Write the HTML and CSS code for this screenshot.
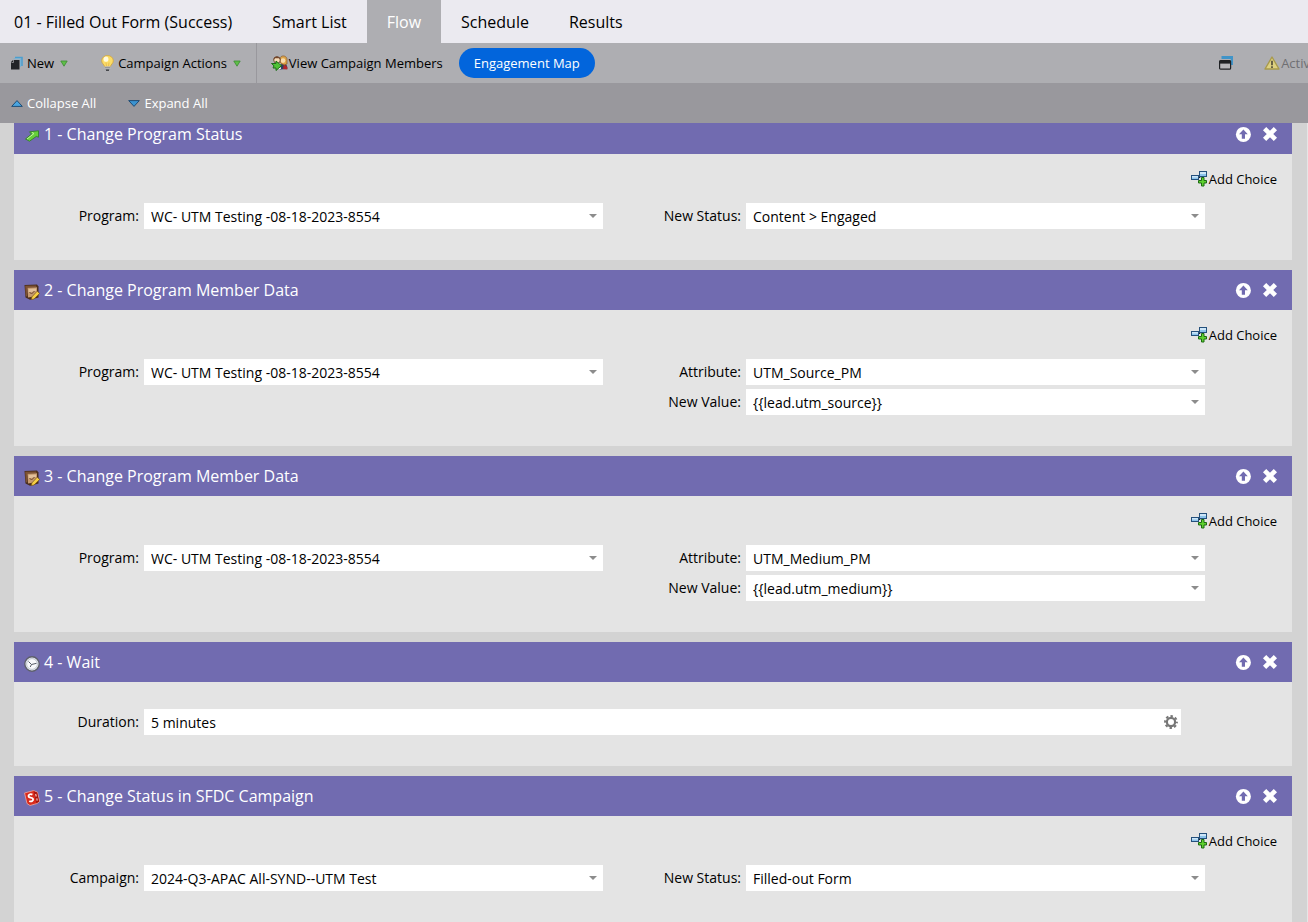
FILE: index.html
```html
<!DOCTYPE html>
<html lang="en">
<head>
<meta charset="UTF-8">
<title>01 - Filled Out Form (Success)</title>
<link rel="stylesheet" href="styles.css">
</head>
<body>

<!-- Icons used more than once -->
<svg class="sprite" aria-hidden="true">
    <symbol id="icon-up" viewBox="0 0 16 16">
        <circle cx="8.4" cy="8.4" r="7.5" fill="#fff"/>
        <path d="M8.4 3.4 L12.8 8.2 H10 V12.8 H6.8 V8.2 H4 Z" fill="#716bb0"/>
    </symbol>
    <symbol id="icon-close" viewBox="0 0 16 16">
        <path d="M2.6 2.6 L13.4 13.4 M13.4 2.6 L2.6 13.4" stroke="#fff" stroke-width="4.6"/>
    </symbol>
    <symbol id="icon-choice" viewBox="0 0 16 16">
        <path d="M7 6.5 H9 V4" fill="none" stroke="#222" stroke-width="1"/>
        <rect x="0.5" y="4.5" width="7" height="4" fill="#8cc4ec" stroke="#24507c"/>
        <rect x="1" y="5" width="6" height="1.5" fill="#cde6f8"/>
        <rect x="8.5" y="0.5" width="7" height="5" fill="#8cc4ec" stroke="#24507c"/>
        <rect x="9" y="1" width="6" height="2" fill="#cde6f8"/>
        <path d="M10.5 6.5 H13 V9.5 H15.5 V12 H13 V15 H10.5 V12 H7.5 V9.5 H10.5 Z" fill="#5fd02f" stroke="#1c6a12"/>
    </symbol>
    <symbol id="icon-data" viewBox="0 0 16 16">
        <path d="M0.5 1 L13 0.6 L14.5 2.5 V13.5 L6 15.8 L1.5 13.5 Z" fill="#4a2d1c"/>
        <path d="M1.2 1.8 L12 1.4 L12.6 3 L3.5 3.8 L3.2 12.8 L1.8 12 Z" fill="#7e5233"/>
        <path d="M3.5 3.8 L13 3.2 V12 L4 13.5 Z" fill="#c69a70"/>
        <path d="M4.5 5 L12 4.5 V7 L4.5 8.5 Z" fill="#e2c09a"/>
        <path d="M5.5 8 L7.5 10 L10.5 7" fill="none" stroke="#6b4529"/>
        <path d="M7.2 15.5 L7.9 12.9 L13.2 7.2 L15.6 9.4 L10 15 Z" fill="#f6cf45" stroke="#7a5512" stroke-width="0.7"/>
    </symbol>
    <symbol id="icon-menu" viewBox="0 0 8 7">
        <path d="M0.8 1 H7.2 L4 6.2 Z" fill="#5fbf48" stroke="#3b8a33" stroke-width="0.8"/>
    </symbol>
</svg>

<nav class="tabs">
    <a href="#" class="tab">01 - Filled Out Form (Success)</a>
    <a href="#" class="tab">Smart List</a>
    <a href="#" class="tab active">Flow</a>
    <a href="#" class="tab">Schedule</a>
    <a href="#" class="tab">Results</a>
</nav>

<div class="toolbar">
    <button class="tool tool-new">
        <svg width="12" height="14" viewBox="0 0 12 14">
            <path d="M4 1.5 H11 V10" fill="none" stroke="#4b9fd0" stroke-width="1.6"/>
            <path d="M2.5 2.8 H9.5 V11" fill="none" stroke="#76b2d6" stroke-width="1"/>
            <path d="M0 6 L2 4 H8.5 V13.5 H0 Z" fill="#222428"/>
            <path d="M0.5 6.5 H2.5 V4" fill="none" stroke="#aeaeb2" stroke-width="0.7"/>
        </svg>
        <span>New</span>
        <svg class="menu-arrow" width="8" height="7"><use href="#icon-menu"/></svg>
    </button>
    <button class="tool tool-actions">
        <svg width="13" height="16" viewBox="0 0 13 16">
            <path d="M6.5 0.5 C3 0.5 0.7 3 0.7 5.8 C0.7 8.3 3 9.4 3.6 11.5 H9.4 C10 9.4 12.3 8.3 12.3 5.8 C12.3 3 10 0.5 6.5 0.5 Z" fill="#fbdc67" stroke="#d3a43a" stroke-width="0.8"/>
            <ellipse cx="5" cy="4.2" rx="2.4" ry="2.6" fill="#fffbe0"/>
            <path d="M5.5 11 L5 7.5 M7.5 11 L8 7.5" stroke="#e3b24a" stroke-width="0.7"/>
            <rect x="3.8" y="11.4" width="5.4" height="3" fill="#e4e4e4"/>
            <path d="M3.8 12.3 H9.2 M3.8 14 H9.2" stroke="#72767c" stroke-width="0.9"/>
            <path d="M5 15.2 H8" stroke="#33363a" stroke-width="1.3"/>
        </svg>
        <span>Campaign Actions</span>
        <svg class="menu-arrow" width="8" height="7"><use href="#icon-menu"/></svg>
    </button>
    <div class="separator"></div>
    <button class="tool tool-members">
        <svg width="17" height="16" viewBox="0 0 17 16">
            <path d="M9 14.5 C8.5 10 10 8.5 12.5 8.5 C15.5 8.5 16.5 11 16.3 14 Z" fill="#2d3f63"/>
            <path d="M13 9 L16.3 12 V14.5 L12 14 Z" fill="#b3242b"/>
            <path d="M9 4 C9 -0.3 16 0 16 4.5 V9 L13 10 L9.5 8 Z" fill="#dca347" stroke="#8b5a28" stroke-width="0.7"/>
            <circle cx="12" cy="5.6" r="2.4" fill="#f7dcae"/>
            <circle cx="6" cy="5" r="3.3" fill="#f6dcb8" stroke="#54351f" stroke-width="0.8"/>
            <path d="M2.5 5 C2 0.3 9.5 0.3 9.5 5 L8 3.2 L4 3.2 Z" fill="#73452a"/>
            <path d="M4 9.5 L9 8 L10 14 H6 Z" fill="#f1f1f1"/>
            <path d="M0.5 8.5 H5 V6 L10.5 10.7 L5 15.5 V13 H2 L3 10.8 Z" fill="#4fc236" stroke="#1c6d18"/>
        </svg>
        <span>View Campaign Members</span>
    </button>
    <button class="pill">Engagement Map</button>
    <div class="toolbar-right">
        <button class="tool" aria-label="Open in new window">
            <svg width="14" height="14" viewBox="0 0 14 14">
                <path d="M2.5 1.5 H13.3 V9" fill="none" stroke="#4094c8" stroke-width="3"/>
                <rect x="0.6" y="4.6" width="11" height="8.6" rx="1" fill="#b6b6ba" stroke="#1f2124" stroke-width="1.2"/>
                <rect x="0.6" y="4.6" width="11" height="3" fill="#1f2124"/>
            </svg>
        </button>
        <button class="tool tool-activate" disabled>
            <svg width="16" height="14" viewBox="0 0 16 14">
                <path d="M8 1 L15 13 H1 Z" fill="#ded181" stroke="#a89a4c" stroke-width="1.4" stroke-linejoin="round"/>
                <path d="M8 4.8 V9.2 M8 10.3 V12" stroke="#4a4636" stroke-width="1.6"/>
            </svg>
            <span>Activ</span>
        </button>
    </div>
</div>

<div class="subbar">
    <button class="tool">
        <svg width="12" height="7" viewBox="0 0 12 7">
            <path d="M6 0.6 L11.3 6.4 H0.7 Z" fill="#4aa5e0" stroke="#17446e" stroke-width="0.9"/>
        </svg>
        <span>Collapse All</span>
    </button>
    <button class="tool">
        <svg width="12" height="7" viewBox="0 0 12 7">
            <path d="M6 6.4 L11.3 0.6 H0.7 Z" fill="#3b93d0" stroke="#17446e" stroke-width="0.9"/>
        </svg>
        <span>Expand All</span>
    </button>
</div>

<main class="canvas">
    <div class="steps">

        <section class="step">
            <header class="step-header">
                <svg class="step-icon" width="16" height="16" viewBox="0 0 16 16">
                    <path d="M1.5 11 L7.5 6 L5.5 3.8 L14.5 2.8 L14.5 9.2 L12.3 8.4 L5.5 13.2 Z" fill="#66d03a" stroke="#2c7a24" stroke-width="0.8" stroke-linejoin="round"/>
                    <path d="M3 11 L10 5.5 L8 4.5" fill="none" stroke="#c4f2a4"/>
                </svg>
                <h2>1 - Change Program Status</h2>
                <button class="icon-button" aria-label="Move up"><svg width="16" height="16"><use href="#icon-up"/></svg></button>
                <button class="icon-button" aria-label="Delete step"><svg width="16" height="16"><use href="#icon-close"/></svg></button>
            </header>
            <div class="step-body">
                <button class="add-choice"><svg width="16" height="16"><use href="#icon-choice"/></svg><span>Add Choice</span></button>
                <div class="columns">
                    <div class="column">
                        <div class="field">
                            <label for="program1">Program:</label>
                            <div class="combo"><select id="program1"><option>WC- UTM Testing -08-18-2023-8554</option></select></div>
                        </div>
                    </div>
                    <div class="column">
                        <div class="field">
                            <label for="status1">New Status:</label>
                            <div class="combo"><select id="status1"><option>Content &gt; Engaged</option></select></div>
                        </div>
                    </div>
                </div>
            </div>
        </section>

        <section class="step">
            <header class="step-header">
                <svg class="step-icon" width="16" height="16"><use href="#icon-data"/></svg>
                <h2>2 - Change Program Member Data</h2>
                <button class="icon-button" aria-label="Move up"><svg width="16" height="16"><use href="#icon-up"/></svg></button>
                <button class="icon-button" aria-label="Delete step"><svg width="16" height="16"><use href="#icon-close"/></svg></button>
            </header>
            <div class="step-body">
                <button class="add-choice"><svg width="16" height="16"><use href="#icon-choice"/></svg><span>Add Choice</span></button>
                <div class="columns">
                    <div class="column">
                        <div class="field">
                            <label for="program2">Program:</label>
                            <div class="combo"><select id="program2"><option>WC- UTM Testing -08-18-2023-8554</option></select></div>
                        </div>
                    </div>
                    <div class="column">
                        <div class="field">
                            <label for="attribute2">Attribute:</label>
                            <div class="combo"><select id="attribute2"><option>UTM_Source_PM</option></select></div>
                        </div>
                        <div class="field">
                            <label for="value2">New Value:</label>
                            <div class="combo"><select id="value2"><option>{{lead.utm_source}}</option></select></div>
                        </div>
                    </div>
                </div>
            </div>
        </section>

        <section class="step">
            <header class="step-header">
                <svg class="step-icon" width="16" height="16"><use href="#icon-data"/></svg>
                <h2>3 - Change Program Member Data</h2>
                <button class="icon-button" aria-label="Move up"><svg width="16" height="16"><use href="#icon-up"/></svg></button>
                <button class="icon-button" aria-label="Delete step"><svg width="16" height="16"><use href="#icon-close"/></svg></button>
            </header>
            <div class="step-body">
                <button class="add-choice"><svg width="16" height="16"><use href="#icon-choice"/></svg><span>Add Choice</span></button>
                <div class="columns">
                    <div class="column">
                        <div class="field">
                            <label for="program3">Program:</label>
                            <div class="combo"><select id="program3"><option>WC- UTM Testing -08-18-2023-8554</option></select></div>
                        </div>
                    </div>
                    <div class="column">
                        <div class="field">
                            <label for="attribute3">Attribute:</label>
                            <div class="combo"><select id="attribute3"><option>UTM_Medium_PM</option></select></div>
                        </div>
                        <div class="field">
                            <label for="value3">New Value:</label>
                            <div class="combo"><select id="value3"><option>{{lead.utm_medium}}</option></select></div>
                        </div>
                    </div>
                </div>
            </div>
        </section>

        <section class="step">
            <header class="step-header">
                <svg class="step-icon" width="16" height="16" viewBox="0 0 16 16">
                    <circle cx="8" cy="8" r="7.2" fill="#eceff3" stroke="#5d5f6b" stroke-width="1.4"/>
                    <circle cx="8" cy="8" r="5.4" fill="#f8f9fb" stroke="#b9bfc9" stroke-width="0.9"/>
                    <path d="M4.5 5.5 L7.5 8.5 L12.5 7.3 M7.5 8.5 L6.2 11" fill="none" stroke="#555a66"/>
                </svg>
                <h2>4 - Wait</h2>
                <button class="icon-button" aria-label="Move up"><svg width="16" height="16"><use href="#icon-up"/></svg></button>
                <button class="icon-button" aria-label="Delete step"><svg width="16" height="16"><use href="#icon-close"/></svg></button>
            </header>
            <div class="step-body step-body-wait">
                <div class="field">
                    <label for="duration">Duration:</label>
                    <div class="input-box">
                        <input type="text" id="duration" value="5 minutes">
                        <button class="icon-button" aria-label="Wait settings">
                            <svg width="14" height="14" viewBox="0 0 14 14">
                                <circle cx="7" cy="7" r="4.1" fill="none" stroke="#777" stroke-width="2.2"/>
                                <circle cx="7" cy="7" r="5.9" fill="none" stroke="#777" stroke-width="2" stroke-dasharray="2.5 2.134" stroke-dashoffset="1.25"/>
                            </svg>
                        </button>
                    </div>
                </div>
            </div>
        </section>

        <section class="step">
            <header class="step-header">
                <svg class="step-icon" width="16" height="16" viewBox="0 0 16 16">
                    <path d="M0.5 3 L9.5 0.6 L13.5 2.2 L15.6 11.5 L13 13.5 L6 15.5 L3 13.5 Z" fill="#d92a1c" stroke="#f0a79f" stroke-width="0.8"/>
                    <path d="M9.8 1.2 L13.2 2.6 L15.1 11.4 L12.4 13.2 Z" fill="#a5160f"/>
                    <path d="M8.4 4.6 C6.4 3.6 3.9 4.8 4.6 6.7 C5.2 8.2 8.4 7.2 9.1 9.1 C9.6 11 7 12 5.3 11" fill="none" stroke="#fff" stroke-width="1.8"/>
                    <path d="M11.6 4 L12.3 6.5 M12.8 8.4 L13.2 10.6" stroke="#f6c0bb" stroke-width="1.2"/>
                </svg>
                <h2>5 - Change Status in SFDC Campaign</h2>
                <button class="icon-button" aria-label="Move up"><svg width="16" height="16"><use href="#icon-up"/></svg></button>
                <button class="icon-button" aria-label="Delete step"><svg width="16" height="16"><use href="#icon-close"/></svg></button>
            </header>
            <div class="step-body">
                <button class="add-choice"><svg width="16" height="16"><use href="#icon-choice"/></svg><span>Add Choice</span></button>
                <div class="columns">
                    <div class="column">
                        <div class="field">
                            <label for="campaign5">Campaign:</label>
                            <div class="combo"><select id="campaign5"><option>2024-Q3-APAC All-SYND--UTM Test</option></select></div>
                        </div>
                    </div>
                    <div class="column">
                        <div class="field">
                            <label for="status5">New Status:</label>
                            <div class="combo"><select id="status5"><option>Filled-out Form</option></select></div>
                        </div>
                    </div>
                </div>
            </div>
        </section>

    </div>
</main>

</body>
</html>
```
FILE: styles.css
```css
* {
    box-sizing: border-box;
}
body {
    margin: 0;
    height: 100vh;
    display: flex;
    flex-direction: column;
    overflow: hidden;
    font-family: "Open Sans", sans-serif;
    font-size: 13px;
    color: #000;
    background-color: #d3d3d3;
}
button, input, select {
    font: inherit;
    color: inherit;
    border: none;
    padding: 0;
    margin: 0;
    background: none;
}
button {
    cursor: pointer;
}
svg {
    display: block;
    flex: none;
}
.sprite {
    position: absolute;
    width: 0;
    height: 0;
}

/* Tabs */
.tabs {
    display: flex;
    flex: none;
    height: 43px;
    background-color: #ebeaf0;
}
.tab {
    padding: 0 20px;
    line-height: 44px;
    font-size: 16px;
    color: #000;
    text-decoration: none;
    white-space: nowrap;
}
.tab:first-child {
    padding-left: 14px;
}
.tab.active {
    color: #fff;
    background-color: #aeaeb2;
}

/* Toolbars */
.toolbar, .subbar {
    display: flex;
    flex: none;
    align-items: center;
    height: 40px;
    white-space: nowrap;
}
.toolbar {
    background-color: #aeaeb2;
}
.subbar {
    gap: 32px;
    padding-left: 11px;
    color: #fff;
    background-color: #99989d;
}
.tool {
    display: flex;
    align-items: center;
    gap: 4px;
}
.tool-new {
    margin-left: 11px;
}
.tool-actions {
    margin-left: 33px;
}
.menu-arrow {
    margin-left: 2px;
}
.separator {
    width: 1px;
    height: 40px;
    margin: 0 14px 0 15px;
    background-color: #99989d;
}
.tool-members, .tool-activate {
    gap: 1px;
}
.pill {
    height: 30px;
    margin-left: 16px;
    padding: 0 15px;
    border-radius: 15px;
    color: #fff;
    background-color: #0265dc;
}
.toolbar-right {
    display: flex;
    gap: 31px;
    margin: 0 -2px 0 auto;
}
.tool-activate {
    color: #6f6f72;
}

/* Flow steps */
.canvas {
    flex: 1;
    min-height: 0;
    overflow: hidden;
    border-right: 1px solid #e6e6e6;
}
.steps {
    display: flex;
    flex-direction: column;
    gap: 10px;
    margin-top: -9px;
    padding: 0 15px 0 14px;
}
.step-header {
    display: flex;
    align-items: center;
    height: 40px;
    padding: 0 14px 0 10px;
    color: #fff;
    background-color: #716bb0;
}
.step-icon {
    margin-top: 4px;
}
.step-header h2 {
    flex: 1;
    margin: 0 0 0 4px;
    font-size: 16px;
    font-weight: normal;
}
.step-header .icon-button + .icon-button {
    margin-left: 11px;
}
.step-body {
    padding: 15px 0 31px;
    background-color: #e4e4e4;
}
.step-body-wait {
    padding: 27px 111px 31px 0;
}
.add-choice {
    display: flex;
    align-items: center;
    gap: 2px;
    height: 20px;
    margin: 0 15px 14px auto;
}
.columns {
    display: grid;
    grid-template-columns: 1fr 1fr;
    gap: 13px;
    padding-right: 87px;
}
.column {
    display: flex;
    flex-direction: column;
    gap: 4px;
}
.field {
    display: flex;
    gap: 5px;
    font-size: 14px;
}
.field label {
    width: 125px;
    line-height: 26px;
    text-align: right;
}
.combo, .input-box {
    position: relative;
    flex: 1;
    min-width: 0;
    height: 26px;
    background-color: #fff;
}
.combo::after {
    content: "";
    position: absolute;
    top: 11px;
    right: 6px;
    border: 4px solid transparent;
    border-top-color: #8c8c8c;
    border-bottom: none;
    pointer-events: none;
}
.combo select {
    appearance: none;
    width: 100%;
    height: 26px;
    padding: 1px 20px 0 7px;
}
.input-box {
    display: flex;
    align-items: center;
    padding-right: 3px;
}
.input-box input {
    flex: 1;
    min-width: 0;
    height: 26px;
    padding: 1px 7px 0;
}
```
